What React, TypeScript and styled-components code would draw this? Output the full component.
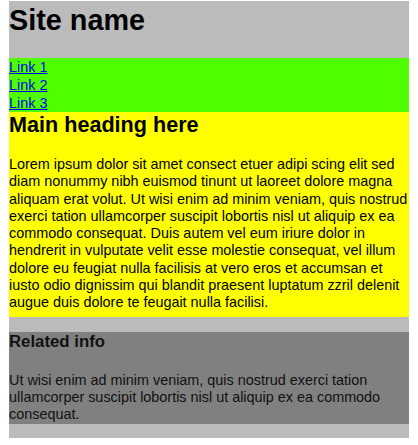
import React from 'react';
import styled, { createGlobalStyle } from 'styled-components';

const GlobalStyle = createGlobalStyle`
  body {
    margin: 0;
    background: #ffffff;
    font-family: 'Liberation Sans', Arial, Helvetica, sans-serif;
    font-size: 14.4px;
    color: #000000;
  }
`;

const LINKS = ['Link 1', 'Link 2', 'Link 3'];

const Page = styled.div`
  width: 400px;
  margin: 1px 0 0 9px;
  padding-bottom: 14px;
  background-color: #bbbbbb;
`;

const Header = styled.header`
  padding: 2px 0 20px;
`;

const SiteName = styled.h1`
  margin: 0;
  font-size: 28.8px;
  line-height: 1.2;
  font-weight: bold;
`;

const Nav = styled.nav`
  display: flex;
  flex-direction: column;
  background-color: #4fff00;
`;

const NavLink = styled.a`
  font-size: 14.4px;
  line-height: 18px;
  color: #0000ee;
  text-decoration: underline;
  align-self: flex-start;
`;

const Main = styled.main`
  padding-bottom: 5px;
  background-color: #ffff00;
`;

const MainHeading = styled.h2`
  margin: 0 0 18.6px;
  font-size: 21.6px;
  line-height: 1.2;
  font-weight: bold;
`;

const Text = styled.p`
  margin: 0;
  font-size: 14.4px;
  line-height: 17.28px;
`;

const Related = styled.aside`
  margin-top: 15px;
  background-color: #808080;
  color: #111111;
`;

const RelatedHeading = styled.h3`
  margin: 0 0 20px;
  font-size: 16.8px;
  line-height: 1.2;
  font-weight: bold;
`;

export default function App() {
  return (
    <>
      <GlobalStyle />
      <Page>
        <Header>
          <SiteName>Site name</SiteName>
        </Header>
        <Nav>
          {LINKS.map((l) => (
            <NavLink key={l} href="#">
              {l}
            </NavLink>
          ))}
        </Nav>
        <Main>
          <MainHeading>Main heading here</MainHeading>
          <Text>
            Lorem ipsum dolor sit amet consect etuer adipi scing elit sed diam nonummy nibh euismod
            tinunt ut laoreet dolore magna aliquam erat volut. Ut wisi enim ad minim veniam, quis
            nostrud exerci tation ullamcorper suscipit lobortis nisl ut aliquip ex ea commodo
            consequat. Duis autem vel eum iriure dolor in hendrerit in vulputate velit esse molestie
            consequat, vel illum dolore eu feugiat nulla facilisis at vero eros et accumsan et iusto
            odio dignissim qui blandit praesent luptatum zzril delenit augue duis dolore te feugait
            nulla facilisi.
          </Text>
        </Main>
        <Related>
          <RelatedHeading>Related info</RelatedHeading>
          <Text>
            Ut wisi enim ad minim veniam, quis nostrud exerci tation ullamcorper suscipit lobortis
            nisl ut aliquip ex ea commodo consequat.
          </Text>
        </Related>
      </Page>
    </>
  );
}
